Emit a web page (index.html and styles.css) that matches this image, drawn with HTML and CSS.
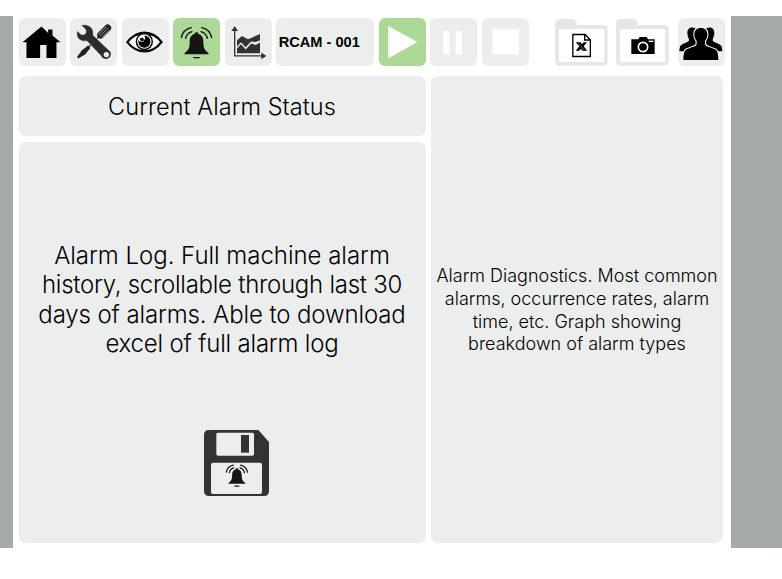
FILE: index.html
```
<!DOCTYPE html>
<html lang="en">
<head>
<meta charset="utf-8">
<title>Alarm Status</title>
<link rel="stylesheet" href="styles.css">
</head>
<body>
<svg width="0" height="0" class="defs">
  <symbol id="bell" viewBox="180 60 100 102">
    <path d="M229.500 81C233 81 235 83 235.500 86C246 89 250 98 250 109C250 124 252 133 259 138C264 141 266 144 266 147H193C193 144 196 141 200 138C207 133 209 124 209 109C209 98 213 89 223.500 86C224 83 226 81 229.500 81Z" fill="#151515"/>
    <g class="rings" fill="none" stroke="#151515" stroke-linecap="round"><path d="M184 97Q189 72 214 67M197 99Q200 84 216 79M275 97Q270 72 245 67M262 99Q259 84 243 79M221 157H238"/></g>
  </symbol>
</svg>
<main class="stage">
  <div class="screen">
    <nav class="toolbar">
      <button class="tile home" aria-label="Home"><svg viewBox="55.500 39 141 141"><path d="M125 64L145 83V73H158V91L182 111H170V158H140V119H121V158H80V111H68Z"/></svg></button>
      <button class="tile tools" aria-label="Tools"><svg viewBox="210 39 141 141"><g fill="none" stroke-linecap="round"><path d="M302 89L323 68" stroke="#222" stroke-width="21"/><path d="M296 87L318 65M301 92L323 70M306 97L328 75" stroke="#ecedee" stroke-width="1.800"/><path d="M296 95L255 136" stroke="#222" stroke-width="4"/></g><path d="M264 121L271 128L256 147L235 160L231 155L246 135Z" fill="#222"/><path d="M243 60C257 55 272 61 278 73C281 80 279 86 280 90L326 134C339 141 334 160 319 162C310 162 305 158 302 151L260 107C244 111 231 101 230 86L231 76L244 88L254 87L258 80L256 72Z" fill="#2b2b2b" stroke="#ecedee" stroke-width="2"/><circle cx="319" cy="148" r="8" fill="#ecedee"/></svg></button>
      <button class="tile view" aria-label="View"><svg viewBox="6 39 141 141"><path d="M18 111Q42 79 73 79Q105 79 129 110Q104 142 74 142Q43 142 18 111Z"/><path d="M26 111Q45 87 73 87Q101 87 120 110Q101 135 74 135Q46 135 26 111Z" fill="#f4f5f5"/><circle cx="73" cy="109" r="26"/><circle cx="73" cy="109" r="20" fill="none" stroke="#f4f5f5" stroke-width="3.500"/><circle cx="73" cy="109" r="15"/><path d="M54 99Q60 89 73 89L76 101Q71 103 70 110L57 108Z" fill="#f4f5f5"/><path d="M60 99Q69 94 72 103L69 109L60 105Z"/></svg></button>
      <button class="tile alarm active" aria-label="Alarms"><svg viewBox="159 39 141 141"><use href="#bell" x="180" y="60" width="100" height="102"/></svg></button>
      <button class="tile trends" aria-label="Trends"><svg viewBox="315 39 141 141" fill="#333"><path d="M344 70V152H430" fill="none" stroke="#333" stroke-width="4"/><path d="M344 62L354 77H334ZM439 152L424 142V162Z"/><path d="M351 105L366 92L384 102L400 95L420 86V105L407 110L393 109L377 126L363 111L351 124Z"/><path d="M351 130L363 117L377 133L394 115L407 119L420 112V144H351Z"/></svg></button>
      <div class="tile machine">RCAM - 001</div>
      <button class="tile play active" aria-label="Play"><svg viewBox="359 39 141 141"><path d="M387 62L474 110.500L387 159Z" fill="#fff"/></svg></button>
      <button class="tile pause" aria-label="Pause"><svg viewBox="33 39 141 141"><path d="M73 77H92V147H73ZM110 77H129V147H110Z" fill="#fff"/></svg></button>
      <button class="tile stop" aria-label="Stop"><svg viewBox="187 39 141 141"><path d="M218 72H298V147H218Z" fill="#fff"/></svg></button>
      <button class="folder excel" aria-label="Export to Excel"><svg viewBox="405 42 159 141"><path d="M405 57Q405 42 420 42H456Q470 42 471 60H550Q563 60 563 73V169Q563 182 550 182H418Q405 182 405 169Z" fill="#e5e6e6"/><rect x="417" y="72" width="136" height="99" rx="4" fill="#fff"/><path d="M458.500 88.500H495L511 104V154.500H458.500ZM494 89V105H511" fill="#fff" stroke="#000" stroke-width="4"/><path d="M467 112H482L486 118L491 112H501L491 124L502 137H487L483 131L478 137H467L478 124Z"/><path d="M475 115L492 134" stroke="#fff" stroke-width="1.200"/></svg></button>
      <button class="folder photo" aria-label="Screenshots"><svg viewBox="78 42 159 141"><path d="M78 57Q78 42 93 42H129Q143 42 144 60H223Q236 60 236 73V169Q236 182 223 182H91Q78 182 78 169Z" fill="#e5e6e6"/><rect x="90" y="72" width="136" height="99" rx="4" fill="#fff"/><path d="M124 103H145L149 96H170L174 103H194V147H124Z"/><circle cx="159" cy="126" r="14" fill="none" stroke="#fff" stroke-width="5"/><path d="M176 109H190" stroke="#fff" stroke-width="4"/></svg></button>
      <button class="tile users" aria-label="Users"><svg viewBox="263 39 141 141"><path d="M316 70C304 63 291 68 291 83C291 94 296 98 296 104C296 112 275 113 270 122Q267 128 267 138H322V80Z"/><path d="M347 70C359 63 372 68 372 83C372 94 367 98 367 104C367 112 388 113 393 122Q396 128 396 138H341V80Z"/><path d="M331.500 68C319 68 312 76 312 88C312 97 315 102 319 107V117C317 125 300 126 288 133Q279 138 279 164H384Q384 138 375 133C363 126 346 125 344 117V107C348 102 351 97 351 88C351 76 344 68 331.500 68Z" stroke="#ecedee" stroke-width="7" paint-order="stroke"/></svg></button>
    </nav>
    <div class="panels">
      <section class="panel status"><h1>Current Alarm Status</h1></section>
      <section class="panel log">
        <p><span class="a1">Alarm Log. Full machine alarm</span><span class="a2">history, scrollable through last 30</span><span class="a3">days of alarms. Able to download</span><span class="a4">excel of full alarm log</span></p>
        <button class="save" aria-label="Download alarm log"><svg viewBox="42 30 195 198"><path d="M57 30H205L237 66V213Q237 228 222 228H57Q42 228 42 213V45Q42 30 57 30Z" fill="#333"/><rect x="79" y="38" width="113" height="69" rx="5" fill="#eceeed"/><path d="M153 45H177V98H153Z" fill="#333"/><rect x="63" y="128" width="153" height="94" rx="6" fill="#eceeed"/><use href="#bell" x="106" y="129" width="70" height="74"/></svg></button>
      </section>
      <section class="panel diagnostics">
        <p><span>Alarm Diagnostics. Most common</span><span>alarms, occurrence rates, alarm</span><span>time, etc. Graph showing</span><span>breakdown of alarm types</span></p>
      </section>
    </div>
  </div>
</main>
</body>
</html>
```
FILE: styles.css
```
* { box-sizing: border-box; }
body { margin: 0; padding-top: 16px; background: #fff; color: #000; font-family: Inter, "Liberation Sans", sans-serif; }
.defs { display: block; }
.rings { stroke-width: 4px; }
.save { --ring: 5.500px; }
.rings { stroke-width: var(--ring, 4px); }
.stage { height: 532px; background: #a6aaa9; padding: 0 51px 0 13px; }
.screen { height: 100%; background: #fff; padding: 2px 8px 5px 5.5px; }
button { border: 0; padding: 0; background: none; }
.toolbar { display: flex; height: 47.500px; margin-right: -2px; }
.tile { flex: 0 0 47px; height: 47.500px; border-radius: 6px; background: #eceeee; }
.tile svg, .folder svg, .save svg { display: block; width: 100%; height: 100%; }
.home svg { transform: translateX(-0.700px); }
.tools, .view, .trends, .pause, .stop { margin-left: 4.600px; }
.alarm { margin-left: 4.400px; }
.active { background: #acd898; }
.machine { flex-basis: 98px; margin-left: 4px; padding-left: 3px; font: bold 14.600px/48px "Liberation Sans", sans-serif; white-space: nowrap; }
.play { margin-left: 5px; }
.folder { flex: 0 0 53px; height: 47px; margin-top: 1px; }
.excel { margin-left: 26px; }
.photo { margin-left: 8px; }
.users { margin-left: 9px; }
.panels { display: grid; grid-template-columns: 407px 292px; grid-template-rows: 60px 401px; gap: 6px 5.500px; margin-top: 10.500px; }
.panel { background: #eceeed; border-radius: 7px; }
.status { display: flex; align-items: center; justify-content: center; padding-top: 2px; }
h1, p { margin: 0; font-weight: 300; text-align: center; white-space: nowrap; }
h1 { font-size: 23.500px; line-height: 30px; letter-spacing: 0.060px; }
p span { display: block; }
.log { display: flex; flex-direction: column; align-items: center; padding-top: 99px; }
.log p { font-size: 24px; line-height: 29.300px; }
.a1 { letter-spacing: -0.030px; }
.a2 { letter-spacing: -0.260px; }
.a3 { letter-spacing: -0.120px; }
.a4 { letter-spacing: -0.200px; }
.save { width: 65px; height: 66px; margin: 71.500px 0 0 28px; }
.diagnostics { grid-column: 2; grid-row: 1 / 3; display: flex; align-items: center; justify-content: center; padding-top: 2px; }
.diagnostics p { font-size: 18px; line-height: 22.700px; }
```
